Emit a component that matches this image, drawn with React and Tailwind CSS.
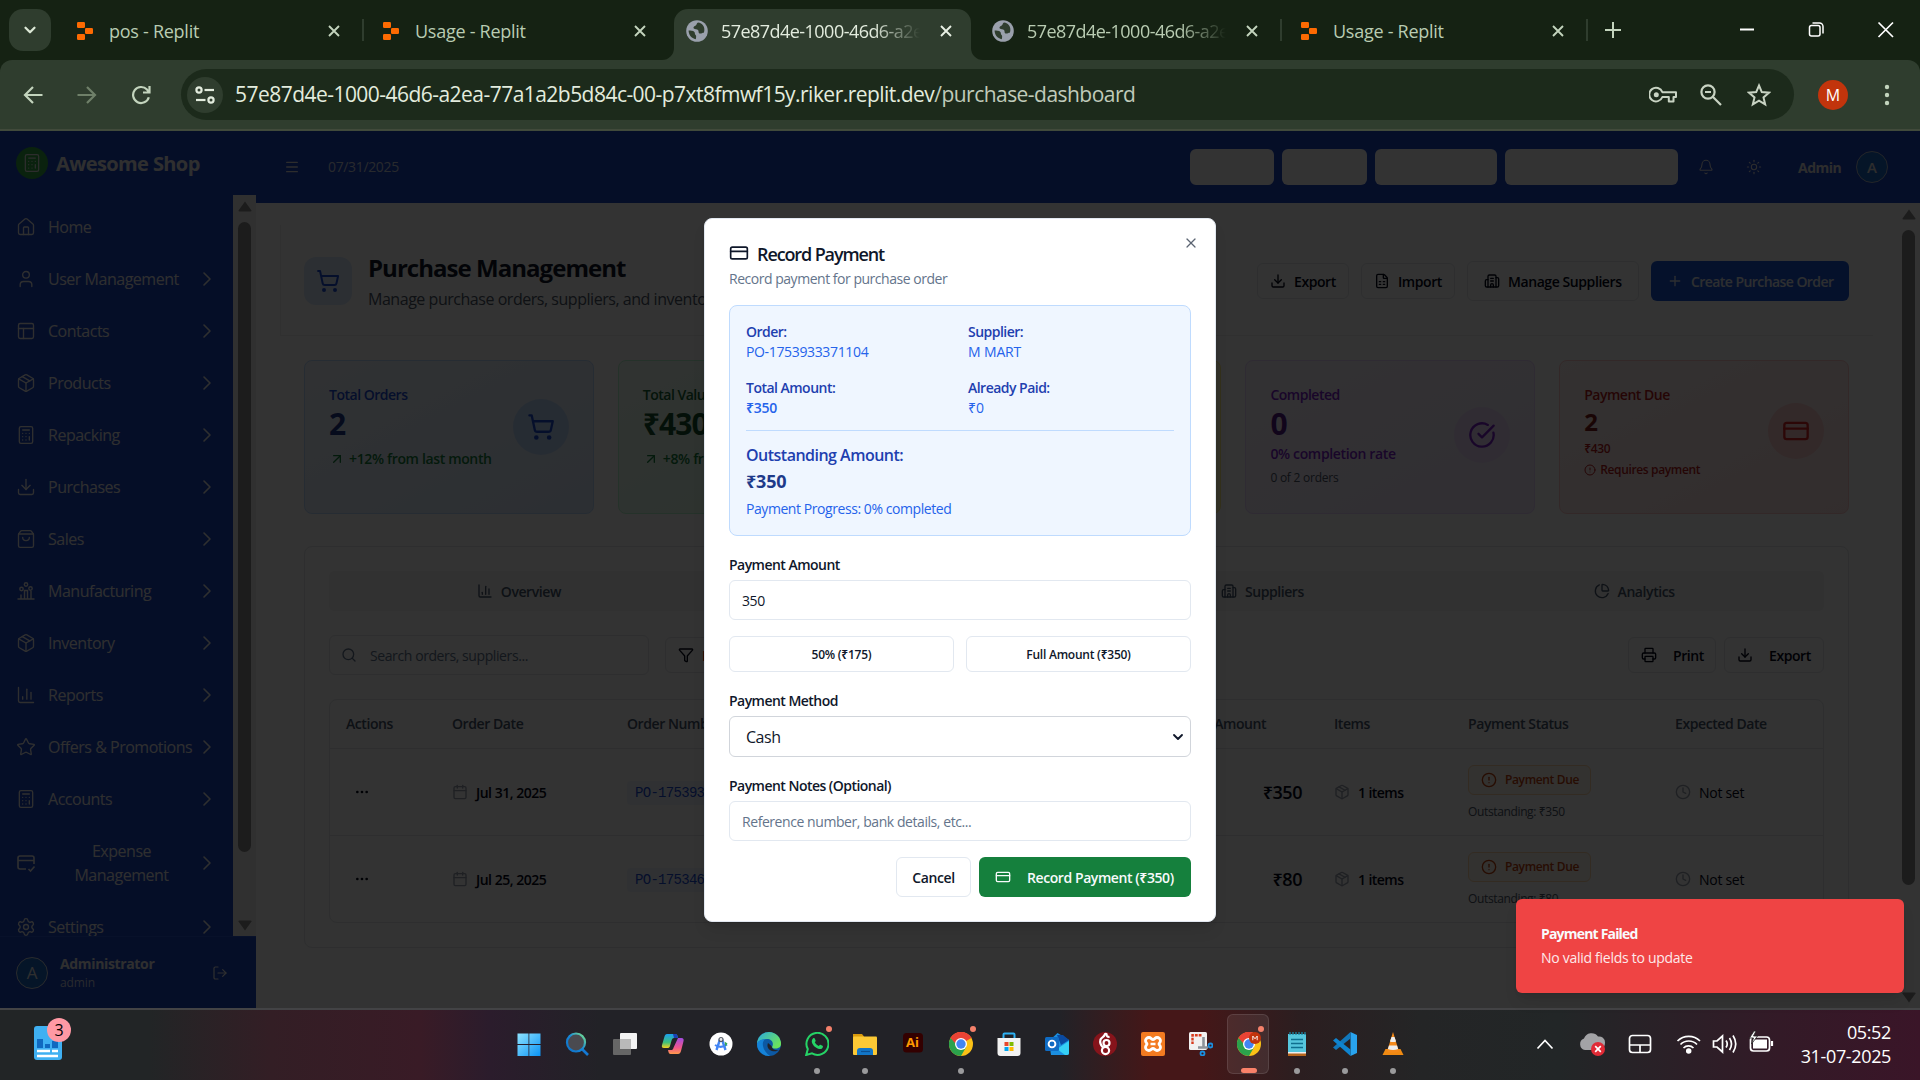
import React from "react";
import {
  House, User, PanelsTopLeft, Package, Calculator, Download, ShoppingBag, ChartColumn, Star,
  Settings, ChevronRight, LogOut, Menu, Bell, Sun, ShoppingCart, FileSpreadsheet, Building2,
  Plus, ArrowUpRight, CircleCheckBig, CreditCard, CircleAlert, ChartPie, Search, Funnel,
  Printer, Calendar, Clock, Ellipsis, X, ChevronDown,
} from "lucide-react";

/* ---------- browser chrome ---------- */

function ReplitIcon() {
  return (
    <svg width="16" height="18" viewBox="0 0 16 18" className="shrink-0 fill-[#fd6a02]">
      <rect x="0" y="0" width="8" height="6" rx="1.2" />
      <rect x="8" y="6" width="8" height="6" rx="1.2" />
      <rect x="0" y="12" width="8" height="6" rx="1.2" />
    </svg>
  );
}

function GlobeIcon() {
  return (
    <svg width="22" height="22" viewBox="0 0 22 22" className="shrink-0">
      <circle cx="11" cy="11" r="10.8" fill="#9aa0ac" />
      <path d="M12 2.6c-1.8 1-1 2.6-2.6 3.2-1.6.5-2.4 1.6-1.6 2.8 1 1.2 3.4.2 4.4 1.6.8 1.2-.2 2.4 1.2 3.2 1.4.6 2.8-.6 4.4-.6 1.4-3.6.2-7.6-2.8-9.4-1-.6-2-.8-3-.8z" fill="#2f3d2e" />
      <path d="M2.6 10.6c1.6.2 4.6 0 5.8 1.4.9 1.1 0 2 1.2 3 .9.8.5 2.6.2 4.2C5.400 18.400 2.600 15 2.600 10.600z" fill="#2f3d2e" />
    </svg>
  );
}

function CloseGlyph({ className }) {
  return (
    <svg width="12" height="12" viewBox="0 0 12 12" className={className} fill="none" stroke="currentColor" strokeWidth="1.9">
      <path d="M1 1l10 10M11 1L1 11" />
    </svg>
  );
}

const TABS = [
  { title: "pos - Replit", icon: "replit", sep: true },
  { title: "Usage - Replit", icon: "replit" },
  { title: "57e87d4e-1000-46d6-a2ea", icon: "globe", active: true },
  { title: "57e87d4e-1000-46d6-a2ea", icon: "globe", sep: true },
  { title: "Usage - Replit", icon: "replit", sep: true },
];

function Tab({ tab }) {
  return (
    <div className="relative h-[60px] w-[306px] shrink-0 pt-[9px]">
      {tab.active && (
        <svg width="322" height="51" viewBox="0 0 322 51" className="absolute top-[9px] -left-[12px] fill-[#2f3d2e]">
          <path d="M0 51a12 12 0 0 0 12-12V14A14 14 0 0 1 26 0H295a14 14 0 0 1 14 14V39a12 12 0 0 0 12 12z" />
        </svg>
      )}
      <div className="relative flex h-[43px] items-center pl-3">
        <span className="flex w-[22px] justify-center">{tab.icon === "replit" ? <ReplitIcon /> : <GlobeIcon />}</span>
        <span
          className={
            "mt-[2px] ml-[13px] w-[199px] overflow-hidden text-[18px] whitespace-nowrap " +
            (tab.icon === "globe" ? "tracking-[-0.03em] [mask-image:linear-gradient(to_right,black_76%,transparent)] " : "tracking-[-0.015em] ") +
            (tab.active ? "text-[#e3ecde]" : "text-[#b9ccb2]")
          }
        >
          {tab.title}
        </span>
        <CloseGlyph className={"ml-[20px] " + (tab.active ? "text-[#e8f0e4]" : "text-[#c3d4bd]")} />
      </div>
      {tab.sep && <div className="absolute top-[19px] right-[4px] h-[22px] w-[2px] bg-[#2f3d2e]" />}
    </div>
  );
}

function BrowserChrome() {
  return (
    <div className="h-[131px] bg-[#152213] text-[#c3d4bd]">
      <div className="flex h-[60px]">
        <div className="mt-[9px] ml-[9px] flex size-[42px] items-center justify-center rounded-[14px] bg-[#2f3d2e]">
          <ChevronDown size={18} strokeWidth={3} color="#dce8d6" />
        </div>
        <div className="ml-[11px] flex">
          {TABS.map((t, i) => <Tab key={i} tab={t} />)}
        </div>
        <svg width="16" height="16" viewBox="0 0 16 16" className="mt-[22px] ml-[13px] stroke-[#c3d4bd]" strokeWidth="2">
          <path d="M8 0v16M0 8h16" />
        </svg>
        <div className="mt-[21px] ml-auto flex pr-[26px] text-white">
          <svg width="154" height="17" viewBox="0 0 154 17" fill="none" stroke="currentColor" strokeWidth="1.500">
            <path d="M0 8.500h14" strokeWidth="2" />
            <rect x="69.500" y="4.500" width="10.500" height="10.500" rx="2" />
            <path d="M72.500 2h7a3.500 3.500 0 0 1 3.500 3.500v7" />
            <path d="M138.500 1.500l14.500 14.500M153 1.500L138.500 16" strokeWidth="1.700" />
          </svg>
        </div>
      </div>
      <div className="flex h-[69px] items-center rounded-t-xl bg-[#2f3d2e]">
        <svg width="20" height="18" viewBox="0 0 20 18" className="ml-[23px]" fill="none" stroke="#c3d4bd" strokeWidth="2.200">
          <path d="M19.500 9H2M10 1L2 9l8 8" />
        </svg>
        <svg width="20" height="18" viewBox="0 0 20 18" className="ml-[34px]" fill="none" stroke="#6f8069" strokeWidth="2.200">
          <path d="M.5 9H18M10 1l8 8-8 8" />
        </svg>
        <svg width="20" height="20" viewBox="0 0 20 20" className="ml-[34px]" fill="none" stroke="#c3d4bd" strokeWidth="2.200">
          <path d="M17.800 12.200A8 8 0 1 1 16 4.600L18 7M18.500 1v6.500H12" />
        </svg>
        <div className="ml-[30px] flex h-[51px] w-[1613px] items-center rounded-full bg-[#1c2a1b] text-[#e3ecde]">
          <div className="ml-[6px] flex size-9 items-center justify-center rounded-full bg-[#2f3d2e]">
            <svg width="20" height="18" viewBox="0 0 20 18" fill="none" stroke="currentColor" strokeWidth="2.200">
              <circle cx="4" cy="4" r="2.600" /><path d="M9.500 4H19" />
              <circle cx="16" cy="14" r="2.600" /><path d="M1 14h9.500" />
            </svg>
          </div>
          <span className="ml-[12px] text-[21px] tracking-[-0.0255em] whitespace-nowrap">
            57e87d4e-1000-46d6-a2ea-77a1a2b5d84c-00-p7xt8fmwf15y.riker.replit.dev<span className="text-[#c0cbba]">/purchase-dashboard</span>
          </span>
          <div className="ml-auto flex items-center pr-[23px] text-[#c8d3c3]">
            <svg width="28" height="18" viewBox="0 0 28 18" fill="none" stroke="currentColor" strokeWidth="2">
              <path d="M13.400 6.200H27V11h-2.500v4.500h-4.700V11h-6.400A6.800 6.800 0 1 1 13.400 6.200z" strokeLinejoin="round" />
              <circle cx="7.300" cy="8.700" r="2.500" fill="currentColor" stroke="none" />
            </svg>
            <svg width="22" height="22" viewBox="0 0 22 22" className="ml-[23px]" fill="none" stroke="currentColor" strokeWidth="2.200">
              <circle cx="8" cy="8" r="6.600" /><path d="M13 13l8 8M5 8h6" />
            </svg>
            <svg width="24" height="24" viewBox="0 0 24 24" className="ml-[25px]" fill="none" stroke="currentColor" strokeWidth="2">
              <path d="M12 2.500l2.800 6.600 7.200.6-5.500 4.700 1.700 7L12 17.700 5.800 21.400l1.700-7L2 9.700l7.200-.6z" />
            </svg>
          </div>
        </div>
        <div className="ml-[24px] flex size-[30px] items-center justify-center rounded-full bg-[#c2340c] text-[16px] text-white">M</div>
        <svg width="6" height="22" viewBox="0 0 6 22" className="ml-[36px] fill-[#c3d4bd]">
          <circle cx="3" cy="3" r="2.200" /><circle cx="3" cy="11" r="2.200" /><circle cx="3" cy="19" r="2.200" />
        </svg>
      </div>
      <div className="h-[2px] bg-[#414a3b]" />
    </div>
  );
}

/* ---------- sidebar ---------- */

function FactoryIcon() {
  return (
    <svg width="20" height="20" viewBox="0 0 20 20" fill="none" stroke="currentColor" strokeWidth="1.400" className="shrink-0">
      <path d="M1.500 18h17M5 17.500V13.500M8.500 17.500V9.500h3v8M15 17.500V10" />
      <circle cx="10" cy="3.500" r="1.700" /><circle cx="5.500" cy="8" r="1.700" /><circle cx="14.500" cy="7.500" r="1.700" />
    </svg>
  );
}

function ExpenseIcon() {
  return (
    <svg width="20" height="20" viewBox="0 0 20 20" fill="none" stroke="currentColor" strokeWidth="1.600" className="shrink-0">
      <path d="M10 16H4a2 2 0 0 1-2-2V5a2 2 0 0 1 2-2h12a2 2 0 0 1 2 2v6M2 7.500h16M12.500 16l2 2 4-4.500" />
    </svg>
  );
}

const NAV = [
  ["Home", House], ["User Management", User], ["Contacts", PanelsTopLeft],
  ["Products", Package], ["Repacking", Calculator], ["Purchases", Download],
  ["Sales", ShoppingBag], ["Manufacturing", FactoryIcon], ["Inventory", Package],
  ["Reports", ChartColumn], ["Offers & Promotions", Star], ["Accounts", Calculator],
  ["Expense Management", ExpenseIcon], ["Settings", Settings],
];

function Arrow({ down }) {
  return (
    <svg width="14" height="11" viewBox="0 0 14 11" className={"fill-[#8b8b8b] " + (down ? "rotate-180" : "")}>
      <path d="M7 0.500L13.500 9.500Q13.800 10.500 12.500 10.500H1.500Q.2 10.500.5 9.500z" />
    </svg>
  );
}

function Sidebar() {
  return (
    <aside className="flex h-[877px] w-64 shrink-0 flex-col bg-[#1a45c4] text-[#ececec]">
      <div className="flex h-16 items-center pl-4">
        <div className="flex size-8 items-center justify-center rounded-full bg-[#35a845] text-[#e0e0e0]">
          <Calculator size={20} strokeWidth={1.5} />
        </div>
        <span className="mt-[2px] ml-2 text-[20px] leading-none font-bold tracking-[-0.03em] whitespace-nowrap">Awesome Shop</span>
      </div>
      <div className="flex h-[741px] overflow-hidden">
        <nav className="flex w-[233px] flex-col gap-2 pt-[10px]">
          {NAV.map(([label, Icon]) => (
            <div key={label} className={"flex shrink-0 items-center pl-4 " + (label === "Expense Management" ? "h-[68px]" : "h-11")}>
              <Icon size={20} strokeWidth={1.6} className="shrink-0" />
              <span className={"ml-3 text-[16px] leading-6 font-medium tracking-[-0.03em] " + (label === "Expense Management" ? "w-[150px] text-center" : "whitespace-nowrap")}>
                {label}
              </span>
              {label !== "Home" && <ChevronRight size={24} strokeWidth={1.6} className="mr-[14px] ml-auto shrink-0" />}
            </div>
          ))}
        </nav>
        <div className="flex w-[23px] flex-col items-center bg-[#f0f0f0] pt-[6px] pb-[5px]">
          <Arrow />
          <div className="mt-[10px] h-[630px] w-[13px] rounded-full bg-[#8b8b8b]" />
          <div className="mt-auto"><Arrow down /></div>
        </div>
      </div>
      <div className="flex h-[72px] items-center border-t border-[#2a55cf] pr-[28px] pl-4">
        <div className="flex size-8 items-center justify-center rounded-full border-[1.500px] border-gray-300 bg-[#1a68c8] text-[17px] font-medium">A</div>
        <div className="ml-3">
          <div className="mt-[1px] text-[14px] leading-5 font-bold tracking-[-0.025em]">Administrator</div>
          <div className="text-[12px] leading-[18px] tracking-[-0.01em] text-[#c8d0e0]">admin</div>
        </div>
        <LogOut size={16} strokeWidth={1.8} className="ml-auto" />
      </div>
    </aside>
  );
}

/* ---------- page ---------- */

function TopBar() {
  return (
    <header className="flex h-[72px] items-center bg-[#1a45c4] pr-8 pl-7 text-[#e0e0e0]">
      <Menu size={16} strokeWidth={2} />
      <span className="mb-[1px] ml-[28px] text-[14px] tracking-[-0.025em] text-[#c8d0e0]">07/31/2025</span>
      <div className="ml-auto flex items-center">
        <div className="flex gap-2">
          <div className="h-9 w-[84px] rounded-md bg-white" />
          <div className="h-9 w-[85px] rounded-md bg-white" />
          <div className="h-9 w-[122px] rounded-md bg-white" />
          <div className="h-9 w-[173px] rounded-md bg-white" />
        </div>
        <Bell size={16} strokeWidth={1.6} className="ml-[20px]" />
        <Sun size={16} strokeWidth={1.6} className="ml-8" />
        <span className="ml-9 w-[42px] text-[14px] font-bold tracking-[-0.035em]">Admin</span>
        <div className="ml-4 flex size-8 items-center justify-center rounded-full border-[1.500px] border-[#b0b8c8] bg-[#1a68c8] text-[15px] font-semibold">A</div>
      </div>
    </header>
  );
}

function OutlineButton({ icon: Icon, label, className, iconClass, textClass }) {
  return (
    <div className={"flex shrink-0 items-center rounded-md border border-gray-200 text-[14px] font-semibold whitespace-nowrap text-slate-950 " + className}>
      <Icon size={16} className={iconClass} />
      <span className={textClass}>{label}</span>
    </div>
  );
}

function PageHeader() {
  return (
    <div className="flex h-[111px] items-center border-b border-l border-gray-200/70 bg-white pt-[2px] pr-6 pl-[23px]">
      <div className="flex size-12 items-center justify-center rounded-xl bg-[#dbeafe] text-[#1d4ed8]"><ShoppingCart size={24} /></div>
      <div className="mt-[4px] ml-4">
        <div className="text-[24px] leading-8 font-bold tracking-[-0.04em] text-gray-900">Purchase Management</div>
        <div className="w-[380px] overflow-hidden text-[16px] leading-[30px] tracking-[-0.029em] whitespace-nowrap text-gray-600">Manage purchase orders, suppliers, and inventory</div>
      </div>
      <div className="ml-auto flex items-center gap-3">
        <OutlineButton icon={Download} label="Export" className="h-9 w-[92px] pl-3" textClass="ml-2 tracking-[-0.03em]" />
        <OutlineButton icon={FileSpreadsheet} label="Import" className="h-9 w-[94px] pl-3" textClass="ml-2 tracking-[-0.03em]" />
        <OutlineButton icon={Building2} label="Manage Suppliers" className="h-10 w-[172px] pl-4" textClass="ml-2 tracking-[-0.03em]" />
        <div className="flex h-10 w-[198px] items-center rounded-md bg-[#1d57d8] pl-4 text-[14px] font-semibold whitespace-nowrap text-slate-200">
          <Plus size={16} /><span className="ml-2 tracking-[-0.04em]">Create Purchase Order</span>
        </div>
      </div>
    </div>
  );
}

function StatCard({ className, circle, icon: Icon, children }) {
  return (
    <div className={"flex h-[154px] items-start justify-between rounded-lg border bg-gradient-to-br pt-6 pr-6 pl-6 " + className}>
      <div className="whitespace-nowrap">{children}</div>
      <div className={"flex size-14 shrink-0 items-center justify-center rounded-full " + circle}><Icon size={28} /></div>
    </div>
  );
}

function Trend({ text }) {
  return (
    <div className="mt-[7px] flex items-center text-[14px] leading-5 font-semibold tracking-[-0.025em] text-[#15803d]">
      <ArrowUpRight size={16} /><span className="ml-1">{text}</span>
    </div>
  );
}

function Stats() {
  return (
    <div className="mt-6 grid grid-cols-5 gap-6 px-6">
      <StatCard className="border-blue-200 from-[#eff6ff] to-[#dbeafe]" circle="mt-[14px] bg-[#bfdbfe] text-[#1d4ed8]" icon={ShoppingCart}>
        <div className="text-[14px] leading-5 font-semibold tracking-[-0.035em] text-[#1d4ed8]">Total Orders</div>
        <div className="mt-[1px] text-[30px] leading-9 font-bold text-[#1e3a8a]">2</div>
        <Trend text="+12% from last month" />
      </StatCard>
      <StatCard className="border-green-200 from-[#f0fdf4] to-[#dcfce7]" circle="mt-[14px] bg-green-200 text-[#15803d]" icon={ChartColumn}>
        <div className="text-[14px] leading-5 font-semibold tracking-[-0.035em] text-[#166534]">Total Value</div>
        <div className="mt-[1px] text-[30px] leading-9 font-bold tracking-[-0.03em] text-[#14532d]">₹430</div>
        <Trend text="+8% from last month" />
      </StatCard>
      <StatCard className="border-yellow-200 from-yellow-50 to-yellow-100" circle="mt-[14px] bg-yellow-200 text-yellow-700" icon={Clock}>
        <div className="text-[14px] leading-5 font-medium text-yellow-700">Pending</div>
      </StatCard>
      <StatCard className="border-purple-200 from-[#faf5ff] to-[#f3e8ff]" circle="mt-[22px] bg-[#e9d5ff]/70 text-[#7e22ce]" icon={CircleCheckBig}>
        <div className="text-[14px] leading-5 font-semibold tracking-[-0.035em] text-[#7e22ce]">Completed</div>
        <div className="mt-[1px] text-[30px] leading-9 font-bold text-[#581c87]">0</div>
        <div className="mt-[2px] text-[14px] leading-5 font-semibold tracking-[-0.025em] text-[#7e22ce]">0% completion rate</div>
        <div className="mt-[6px] text-[12px] leading-4 tracking-[-0.02em] text-gray-600">0 of 2 orders</div>
      </StatCard>
      <StatCard className="border-red-200 from-[#fef2f2] to-[#fee2e2]" circle="mt-[18px] bg-[#fecaca] text-[#dc2626]" icon={CreditCard}>
        <div className="text-[14px] leading-5 font-semibold tracking-[-0.035em] text-[#b91c1c]">Payment Due</div>
        <div className="mt-[1px] text-[24px] leading-8 font-bold text-[#7f1d1d]">2</div>
        <div className="mt-[3px] text-[12px] leading-4 font-semibold tracking-[-0.03em] text-[#b91c1c]">₹430</div>
        <div className="mt-[5px] flex items-center text-[12px] leading-4 font-semibold tracking-[-0.03em] text-[#b91c1c]">
          <CircleAlert size={12} /><span className="ml-1">Requires payment</span>
        </div>
      </StatCard>
    </div>
  );
}

const VIEWS = [["Overview", ChartColumn], ["Orders", ShoppingCart], ["Suppliers", Building2], ["Analytics", ChartPie]];

const ROWS = [
  { date: "Jul 31, 2025", po: "PO-1753933371104", amount: "₹350" },
  { date: "Jul 25, 2025", po: "PO-1753465209877", amount: "₹80" },
];

const COLS = "grid grid-cols-[106px_175px_218px_334px_155px_134px_207px_1fr] ";

function OrdersTable() {
  return (
    <div className="mt-6 rounded-lg border border-gray-200 whitespace-nowrap">
      <div className={COLS + "h-[49px] items-center border-b border-gray-200 pb-[1px] pl-4 text-[14px] font-semibold tracking-[-0.03em] text-slate-600"}>
        <div>Actions</div><div>Order Date</div><div>Order Number</div><div>Supplier</div><div>Total Amount</div><div>Items</div><div>Payment Status</div><div>Expected Date</div>
      </div>
      {ROWS.map((r, i) => (
        <div key={r.po} className={COLS + "items-center pl-4 text-[14px] text-slate-950 " + (i === 0 ? "h-[87px] border-b border-gray-200" : "h-[86px]")}>
          <div className="pl-2"><Ellipsis size={16} /></div>
          <div className="flex items-center"><Calendar size={16} className="text-gray-400" /><span className="ml-2 font-semibold tracking-[-0.035em]">{r.date}</span></div>
          <div><span className="rounded bg-blue-50 px-2 py-1 font-[Liberation_Mono,monospace] text-[14px] tracking-[-0.05em] text-[#1d4ed8]">{r.po}</span></div>
          <div />
          <div className="w-[123px] text-right text-[18px] font-semibold tracking-[-0.025em]">{r.amount}</div>
          <div className="flex items-center"><Package size={16} className="text-gray-400" /><span className="ml-2 font-semibold tracking-[-0.04em]">1 items</span></div>
          <div>
            <div className="flex h-[30px] w-[123px] items-center rounded-md border border-orange-200 bg-orange-50 pl-3 text-[12px] font-semibold tracking-[-0.03em] text-[#c2410c]">
              <CircleAlert size={16} /><span className="ml-2">Payment Due</span>
            </div>
            <div className="mt-[9px] text-[12px] leading-4 tracking-[-0.03em] text-gray-600">Outstanding: {r.amount}</div>
          </div>
          <div className="flex items-center"><Clock size={16} className="text-gray-400" /><span className="ml-2 tracking-[-0.02em]">Not set</span></div>
        </div>
      ))}
    </div>
  );
}

function OrdersPanel() {
  return (
    <div className="mx-6 mt-8 h-[402px] rounded-lg border border-gray-200 px-6 pt-6">
      <div className="grid h-10 grid-cols-4 rounded-md bg-[#f3f3f4] p-1">
        {VIEWS.map(([label, Icon], i) => (
          <div key={label} className={"flex items-center justify-center text-[14px] font-semibold tracking-[-0.03em] text-slate-600 " + (i === 1 ? "rounded bg-white" : "")}>
            <Icon size={16} /><span className="ml-2">{label}</span>
          </div>
        ))}
      </div>
      <div className="mt-6 flex h-10 items-center">
        <div className="flex h-10 w-80 items-center rounded-md border border-gray-200 pl-[11px] text-[14px] text-slate-500">
          <Search size={16} /><span className="ml-[13px] tracking-[-0.029em]">Search orders, suppliers...</span>
        </div>
        <OutlineButton icon={Funnel} label="Filters" className="ml-4 h-9 w-[110px] pl-3" textClass="ml-[8px] text-red-700" />
        <OutlineButton icon={Printer} label="Print" className="ml-auto h-9 w-[88px] pl-3" textClass="ml-4 tracking-[-0.03em]" />
        <OutlineButton icon={Download} label="Export" className="ml-2 h-9 w-[100px] pl-3" textClass="ml-4 tracking-[-0.03em]" />
      </div>
      <OrdersTable />
    </div>
  );
}

/* ---------- dialog and toast ---------- */

function Field({ label, value, valueClass }) {
  return (
    <div className="text-[14px] leading-5">
      <div className="font-semibold tracking-[-0.037em] text-[#1e40af]">{label}</div>
      <div className={"text-[#2563eb] " + valueClass}>{value}</div>
    </div>
  );
}

function PaymentDialog() {
  const label = "h-7 text-[14px] leading-[26px] font-semibold tracking-[-0.038em]";
  return (
    <div className="absolute top-[218px] left-[704px] h-[704px] w-[512px] rounded-lg border border-slate-200 bg-white p-6 whitespace-nowrap text-[#0f172a] shadow-lg">
      <X size={16} strokeWidth={1.8} className="absolute top-[16px] right-[16px] text-[#5b6472]" />
      <div className="flex h-5 items-center">
        <CreditCard size={20} />
        <span className="mt-[1px] ml-2 text-[18px] leading-none font-semibold tracking-[-0.062em]">Record Payment</span>
      </div>
      <div className="mt-[6px] text-[14px] leading-5 tracking-[-0.034em] text-[#64748b]">Record payment for purchase order</div>
      <div className="mt-4 h-[231px] rounded-lg border border-[#bfdbfe] bg-[#eff6ff] p-4">
        <div className="grid grid-cols-2 gap-x-4 gap-y-4">
          <Field label="Order:" value="PO-1753933371104" valueClass="tracking-[-0.025em]" />
          <Field label="Supplier:" value="M MART" valueClass="tracking-[-0.01em]" />
          <Field label="Total Amount:" value="₹350" valueClass="font-semibold tracking-[-0.02em]" />
          <Field label="Already Paid:" value="₹0" valueClass="" />
        </div>
        <div className="mt-3 border-t border-[#bfdbfe] pt-3">
          <div className="text-[16px] leading-6 font-semibold tracking-[-0.032em] text-[#1e40af]">Outstanding Amount:</div>
          <div className="text-[18px] leading-7 font-bold tracking-[-0.01em] text-[#1e3a8a]">₹350</div>
          <div className="mt-1 text-[14px] leading-5 tracking-[-0.031em] text-[#2563eb]">Payment Progress: 0% completed</div>
        </div>
      </div>
      <div className={"mt-4 " + label}>Payment Amount</div>
      <div className="flex h-10 items-center rounded-md border border-[#e2e8f0] px-3 text-[14px] tracking-[-0.03em]">350</div>
      <div className="mt-4 grid grid-cols-2 gap-3 text-[12px] font-semibold tracking-[-0.02em]">
        <div className="flex h-9 items-center justify-center rounded-md border border-[#e2e8f0] pt-[2px]">50% (₹175)</div>
        <div className="flex h-9 items-center justify-center rounded-md border border-[#e2e8f0] pt-[2px]">Full Amount (₹350)</div>
      </div>
      <div className={"mt-4 " + label}>Payment Method</div>
      <div className="flex h-[41px] items-center justify-between rounded-md border border-[#d1d5db] pr-[4px] pl-4 text-[16px] tracking-[-0.03em]">
        Cash<ChevronDown size={16} strokeWidth={2.8} />
      </div>
      <div className={"mt-4 " + label}>Payment Notes (Optional)</div>
      <div className="flex h-10 items-center rounded-md border border-[#e2e8f0] px-3 text-[14px] tracking-[-0.031em] text-[#64748b]">Reference number, bank details, etc...</div>
      <div className="mt-4 flex justify-end gap-2 text-[14px] font-semibold">
        <div className="flex h-10 w-[75px] items-center justify-center rounded-md border border-[#e2e8f0] tracking-[-0.03em]">Cancel</div>
        <div className="flex h-10 w-[212px] items-center rounded-md bg-[#15803d] pl-4 text-[#f8fafc]">
          <CreditCard size={16} /><span className="ml-4 tracking-[-0.03em]">Record Payment (₹350)</span>
        </div>
      </div>
    </div>
  );
}

function Toast() {
  return (
    <div className="absolute top-[899px] left-[1516px] h-[94px] w-[388px] rounded-md bg-[#ef4444] pt-[25px] pl-[25px] text-[14px] text-[#f8fafc] shadow-lg">
      <div className="leading-5 font-bold tracking-[-0.058em]">Payment Failed</div>
      <div className="mt-1 leading-5 tracking-[-0.02em] text-[#fde9ea]">No valid fields to update</div>
    </div>
  );
}

/* ---------- taskbar ---------- */

function ChromeLogo() {
  return (
    <>
      <circle cx="12" cy="12" r="12" fill="#fbc116" />
      <path d="M12 12L1.600 6A12 12 0 0 1 22.400 6z" fill="#ea4335" />
      <path d="M1.600 6A12 12 0 0 0 12 24l5.200-9L12 12z" fill="#2ba24c" />
      <path d="M12 6h10.400A12 12 0 0 0 1.600 6l5.200 6z" fill="#ea4335" />
      <circle cx="12" cy="12" r="6" fill="#fff" /><circle cx="12" cy="12" r="4.700" fill="#4285f4" />
    </>
  );
}

const APPS = [
  { art: <><defs><linearGradient id="win" x1="0" y1="0" x2="1" y2="1"><stop stopColor="#8fe3ff" /><stop offset="1" stopColor="#0a93f5" /></linearGradient></defs><path fill="url(#win)" d="M.5 1.500h11v10.500H.5zM12.300 1.500h11.200v10.500H12.300zM.5 13h11v11H.5zM12.300 13h11.200v11H12.300z" /></> },
  { art: <><defs><linearGradient id="sea" x1="1" y1="0" x2="0" y2="1"><stop stopColor="#7ee787" /><stop offset=".5" stopColor="#1687d9" /><stop offset="1" stopColor="#0f6fc5" /></linearGradient></defs><path d="M17 17l6 6" stroke="#1478d4" strokeWidth="2.600" /><circle cx="11" cy="10.500" r="9" fill="#4a4a50" stroke="url(#sea)" strokeWidth="2.200" /></> },
  { art: <><rect x="0" y="7" width="18" height="16" fill="#666" rx="1" /><rect x="7" y="1" width="17" height="16" fill="#f4f4f4" rx="1" /><rect x="7" y="7" width="11" height="10" fill="#b9b9b9" /></> },
  { art: <><defs><linearGradient id="cpa" x1="0" y1="0" x2="0" y2="1"><stop stopColor="#1c9ff0" /><stop offset=".6" stopColor="#3ec07a" /><stop offset="1" stopColor="#f5d120" /></linearGradient><linearGradient id="cpb" x1="0" y1="0" x2="0" y2="1"><stop stopColor="#a04be0" /><stop offset=".6" stopColor="#f0568c" /><stop offset="1" stopColor="#ff9a4a" /></linearGradient></defs><path d="M6 2h8c2 0 2.500 1.500 3 4h-4c-1.500 0-2 1-2.600 3l-1.400 5c-.5 1.500-1 2-3 2H3c-2 0-2.500-1.200-2-3L3.500 4.500C4 3 4.600 2 6 2z" fill="url(#cpa)" /><path d="M12 2h2.500C16 2 16.500 3 17 6h-4z" fill="#1b3fb5" /><path d="M17 6h3.500c2 0 2.500 1.500 2 3.300L20 19c-.5 2-1.500 3-3 3H9.500C8 22 7.500 20.500 7 18h3c1.600 0 2-.6 2.600-2.600z" fill="url(#cpb)" /></> },
  { art: <><circle cx="12" cy="12" r="11.500" fill="#fff" /><path d="M11 7.500L7.500 18M13 7.500L16.500 18" stroke="#4285f4" strokeWidth="2.400" /><path d="M6 13q6 4 12-.5" stroke="#4285f4" strokeWidth="2" fill="none" /><circle cx="12" cy="7.500" r="2" fill="#e8e8e8" stroke="#555b66" strokeWidth="1.200" /><path d="M15.500 9.500l3 2-2 3z" fill="#34a853" /></> },
  { art: <><defs><linearGradient id="edg" x1="0" y1="0" x2="1" y2=".6"><stop stopColor="#2aa9e0" /><stop offset="1" stopColor="#6be35c" /></linearGradient></defs><circle cx="12" cy="12" r="12" fill="#0c59a4" /><path d="M0 12A12 12 0 0 1 24 12c0 3-2.500 4.500-5.500 4.500-2.500 0-4-1-3-2.500C17 10 14 7 10 7 5 7 1 9 0 12z" fill="url(#edg)" /><path d="M0 12c.6-3 4-5 8-4.800C6 9 5.500 11 6 14c.6 4 3.500 7.500 7 9.900A12 12 0 0 1 0 12z" fill="#1583d8" /><path d="M11 11c-1.500 3 0 7.500 5 8.300 2.600.3 4.500-.4 6-1.300-3 1-7-.3-7.500-4z" fill="#222227" /></> },
  { dot: true, badge: true, art: <><path d="M1.200 23l1.600-5.900A11 11 0 1 1 7 21.400z" fill="none" stroke="#25d366" strokeWidth="2" /><path d="M8.200 6.200c.6-.5 1.300-.3 1.600.4l.8 1.900c.2.500-.1 1-.8 1.800 1 1.900 2.200 2.900 4 3.700.7-.8 1.100-1.500 1.600-1.300l2.100 1c.6.3.5.8.3 1.500-.4 1.400-2 2-3.200 1.800-4-.7-7-3.800-7.800-7-.2-1.500.4-2.900 1.400-3.800z" fill="#25d366" /></> },
  { dot: true, art: <><path d="M0 2h9l2 2.500V8H0z" fill="#d99a0c" /><rect x="0" y="4.500" width="24" height="18.500" rx="1" fill="#fcc935" /><path d="M4 23v-4a3 3 0 0 1 3-3h10a3 3 0 0 1 3 3v4z" fill="#1276c8" /><path d="M8 19.500h9" stroke="#0b4f92" strokeWidth="1.200" /></> },
  { text: "Ai", art: <rect x="2" y="1" width="20" height="19.500" rx="3.500" fill="#330000" /> },
  { dot: true, badge: true, art: <ChromeLogo /> },
  { art: <><path d="M6.500 7V2.500q0-1 1-1h9q1 0 1 1V7" fill="none" stroke="#2fb2f4" strokeWidth="2" /><path d="M.5 6h23v15a3 3 0 0 1-3 3h-17a3 3 0 0 1-3-3z" fill="#f2f2f2" /><path fill="#e8472b" d="M7.500 10h4v4h-4z" /><path fill="#7fba00" d="M12.500 10h4v4h-4z" /><path fill="#00a4ef" d="M7.500 15h4v4h-4z" /><path fill="#ffb900" d="M12.500 15h4v4h-4z" /></> },
  { art: <><path d="M4 9l8.500-8L24 8v13a2 2 0 0 1-2 2H6z" fill="#1b8fe0" /><path d="M24 9L12 17l8 6h2a2 2 0 0 0 2-2z" fill="#35d0f5" /><path d="M12 3h6l6 5-8 5z" fill="#0a4aa0" /><rect x="0" y="5" width="14" height="14" rx="1.500" fill="#0f6cc4" /><circle cx="7" cy="12" r="3.400" fill="none" stroke="#fff" strokeWidth="1.900" /></> },
  { art: <><circle cx="12" cy="12" r="12" fill="#86141b" /><g fill="none" stroke="#fff" strokeWidth="2.200"><circle cx="12.500" cy="18.500" r="3.600" /><circle cx="13.500" cy="11" r="3" /><path d="M16.500 4.500c-1.500.8-3 0-2.800-1.500C13.900 1.800 12 1 11.500 3c-.4 2-3 2-4 4.500-1 3.500.5 6 2.500 8" /></g></> },
  { art: <><rect x="0" y="0" width="24" height="24" rx="2" fill="#f37b21" /><path d="M8 5.500c2 0 2.500 2 4 2s2-2 4-2 3.500 1.500 3.500 3.300S18 11 18 12s1.500 1.400 1.500 3.200-1.500 3.300-3.500 3.300-2.500-2-4-2-2 2-4 2-3.500-1.500-3.500-3.300S6 13 6 12 4.500 10.600 4.500 8.800 6 5.500 8 5.500z" fill="none" stroke="#fff" strokeWidth="2.800" /><path d="M9.500 12h5" stroke="#fff" strokeWidth="2.500" /></> },
  { art: <><rect x="0" y="0" width="18" height="18" rx="1.500" fill="#f1f1f1" /><path d="M12.500 3.300H3.500v8.700" fill="none" stroke="#d83b1d" strokeWidth="2.400" strokeDasharray="2.800 1" /><path d="M14.500 5v11.500M9 15.500h10" stroke="#8d939a" strokeWidth="2.600" /><g fill="none" stroke="#1a8fe0" strokeWidth="1.800"><circle cx="21.500" cy="13.500" r="2" /><circle cx="13.500" cy="21.500" r="2" /></g></> },
  { active: true, badge: true, art: <><ChromeLogo /><circle cx="18" cy="6" r="6" fill="#c2340c" /><path d="M15.800 8.200V4l2.200 2.800L20.200 4v4.200" fill="none" stroke="#fff" strokeWidth=".9" /></> },
  { dot: true, art: <><rect x="3" y="2" width="18" height="20" fill="#56c6dd" /><path d="M3 21h18v3H3z" fill="#b5651d" /><path d="M3 20h18v1.500H3z" fill="#eee" /><path d="M6 7.500h12M6 11.500h12M6 15.500h12" stroke="#0f6f8f" strokeWidth="1.600" /><path d="M5 0v3M8 0v3M11 0v3M14 0v3M17 0v3M20 0v3" stroke="#1b87a5" strokeWidth="1.300" /></> },
  { dot: true, art: <><path d="M17.500 0L24 3v18l-6.500 3z" fill="#29a3ee" /><path d="M17.500 0v6.500L3 18 0 15.500z" fill="#1177bb" /><path d="M17.500 24v-6.500L3 6 0 8.500z" fill="#0f84d0" /></> },
  { dot: true, art: <><path d="M4.500 17h15l3 6h-21z" fill="#f08a12" /><path d="M12 0l6 19.500q-6 2.500-12 0z" fill="#f58a1a" /><path d="M10.500 5h3l1.600 4.500q-3 1-6.200 0zM8 13.500h8l1.200 3.500q-5.200 2-10.400 0z" fill="#eeeeee" /></> },
];

function Taskbar() {
  return (
    <footer className="flex h-[72px] items-center border-t-2 border-[#434345] bg-[linear-gradient(90deg,#222526_0,#222526_150px,#331e25_270px,#391b26_420px,#2b1c2c_490px,#222227_600px,#222227_1060px,#451718_1150px,#451718_1200px,#2b1e20_1300px,#242526_1420px,#222627_1560px,#331a27_1780px,#3a1528_1920px)] text-white">
      <div className="relative ml-[34px] h-full w-[40px]">
        <svg width="28" height="34" viewBox="0 0 28 34" className="absolute top-[16px] left-0">
          <rect width="28" height="34" rx="3" fill="#3fb0f2" /><path d="M3 13h6v9H3zM11 18h5v4h-5zM18 15h6v7h-6z" fill="#1069c0" />
          <path d="M3 25h13M18 25h6M3 30h21" stroke="#fff" strokeWidth="2.600" />
        </svg>
        <div className="absolute top-[8px] left-[13px] flex size-6 items-center justify-center rounded-full bg-[#ff99a4] text-[16px] text-black">3</div>
      </div>
      <div className="ml-[431px] flex">
        {APPS.map((a, i) => (
          <div key={i} className="relative flex h-[70px] w-12 items-center justify-center">
            {a.active && <div className="absolute top-[4px] left-[2px] h-[60px] w-[42px] rounded-md border border-white/10 bg-white/8" />}
            <svg width="24" height="24" viewBox="0 0 24 24" className="relative mb-[2px]" fill="none">{a.art}</svg>
            {a.text && <span className="absolute top-[24px] left-[17px] text-[13px] leading-4 font-bold text-[#ff9a00]">{a.text}</span>}
            {a.badge && <div className="absolute top-[16px] left-[33px] size-[6px] rounded-full bg-[#f4816b]" />}
            {a.dot && <div className="absolute top-[58px] left-[21px] size-[6px] rounded-full bg-[#9a9a9c]" />}
            {a.active && <div className="absolute top-[58px] left-[16px] h-[5px] w-4 rounded-full bg-[#f98169]" />}
          </div>
        ))}
      </div>
      <svg width="254" height="32" viewBox="0 0 254 32" className="mb-[2px] ml-[119px] shrink-0" fill="none" stroke="#fff" strokeWidth="1.700">
        <path d="M1.500 20.500L9 12.500l7.500 8" />
        <path d="M49 22a6 6 0 0 1-1-11.500A8 8 0 0 1 62 8.500a6 6 0 0 1 7 6c0 5-3 7.500-7 7.500z" fill="#a3a3a6" stroke="none" />
        <circle cx="62" cy="21" r="7" fill="#e02b36" stroke="none" /><path d="M59.200 18.200l5.600 5.600M64.800 18.200l-5.600 5.600" />
        <rect x="93.500" y="7.500" width="21" height="17" rx="3" /><path d="M93.500 17h21M104 17v7.500" />
        <path d="M141.500 13a16 16 0 0 1 22.500 0M144.500 16.500a11.500 11.500 0 0 1 16.500 0M147.500 20a7 7 0 0 1 10 0" />
        <circle cx="152.700" cy="23" r="1.900" fill="#fff" />
        <path d="M177.500 13h3.500l5.500-5v16l-5.500-5h-3.500zM190 12.500q2.500 3.500 0 7M193.500 10q4 6 0 12M197 7.500q5.500 8.500 0 17" />
        <rect x="214.500" y="9" width="19" height="14" rx="3" /><path d="M236 13v5" strokeWidth="2.200" /><rect x="217" y="11.500" width="14" height="9" fill="#fff" stroke="none" />
        <path d="M218 3l-4.500 7h4l-2 6 6-8h-4l2.500-5z" fill="#fff" stroke="#222" strokeWidth=".8" />
      </svg>
      <div className="mr-[29px] mb-[2px] ml-auto text-right text-[18px] leading-6 tracking-[-0.02em] whitespace-nowrap">
        <div>05:52</div>
        <div>31-07-2025</div>
      </div>
    </footer>
  );
}

export default function App() {
  return (
    <div className="relative h-[1080px] w-[1920px] overflow-hidden font-['Open_Sans','Noto_Sans',sans-serif]">
      <BrowserChrome />
      <div className="relative flex h-[877px] bg-white">
        <Sidebar />
        <div className="min-w-0 grow">
          <TopBar />
          <div className="flex h-[805px] bg-[#fcfcfc]">
            <main className="w-[1617px] pt-[22px] pl-6">
              <PageHeader />
              <Stats />
              <OrdersPanel />
            </main>
            <div className="ml-auto flex w-[23px] flex-col items-center pt-[6px] pb-[5px]">
              <Arrow />
              <div className="mt-[10px] h-[655px] w-[13px] rounded-full bg-[#8b8b8b]" />
              <div className="mt-auto"><Arrow down /></div>
            </div>
          </div>
        </div>
        <div className="absolute inset-0 bg-black/80" />
      </div>
      <Taskbar />
      <PaymentDialog />
      <Toast />
    </div>
  );
}
